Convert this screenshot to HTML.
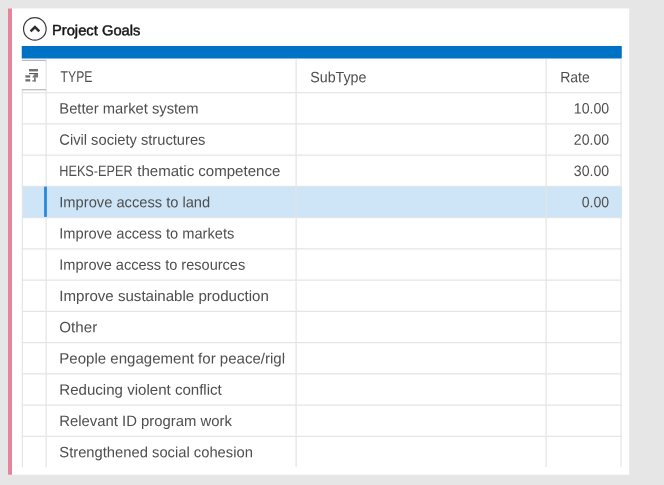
<!DOCTYPE html>
<html lang="en"><head><meta charset="utf-8"><title>Project Goals</title>
<style>
html,body{margin:0;padding:0;background:#e6e6e6;overflow:hidden}
body{width:664px;height:485px;position:relative}
svg{position:absolute;left:0;top:0;display:block;will-change:transform}
text{font-family:"Liberation Sans",Arial,sans-serif;font-size:15.0px;fill:#4e4e4e;text-rendering:geometricPrecision}
.caps{font-size:15.6px}
.title{font-size:14.5px;fill:#151515;stroke:#151515;stroke-width:0.45px}
</style></head><body>
<svg width="664" height="485" viewBox="0 0 664 485">
<rect x="0" y="0" width="664" height="485" fill="#e6e6e6"/>
<rect x="8" y="8.45" width="621.2" height="466.3" fill="#ffffff"/>
<rect x="8" y="8.45" width="4" height="466.3" fill="#e7839a"/>
<circle cx="34.85" cy="28.9" r="11.3" fill="none" stroke="#3a3a3a" stroke-width="1.2"/>
<polyline points="30.6,31.4 34.95,27.15 39.3,31.4" fill="none" stroke="#2e2e2e" stroke-width="2.55"/>
<text class="title" x="51.9" y="35.15" transform="rotate(0.03 96.2 35.1)" textLength="88.6" lengthAdjust="spacingAndGlyphs">Project Goals</text>
<rect x="21.75" y="46" width="600" height="12.5" fill="#0072c6"/>
<defs><clipPath id="g"><rect x="20" y="59" width="603" height="408.0"/></clipPath>
<clipPath id="c1"><rect x="47" y="59" width="237.5" height="420"/></clipPath></defs>
<g clip-path="url(#g)">
<rect x="21.75" y="92.00" width="600" height="1.25" fill="#e5e5e5"/>
<rect x="21.75" y="123.25" width="600" height="1.25" fill="#e5e5e5"/>
<rect x="21.75" y="154.50" width="600" height="1.25" fill="#e5e5e5"/>
<rect x="21.75" y="185.75" width="600" height="1.25" fill="#e5e5e5"/>
<rect x="21.75" y="217.00" width="600" height="1.25" fill="#e5e5e5"/>
<rect x="21.75" y="248.25" width="600" height="1.25" fill="#e5e5e5"/>
<rect x="21.75" y="279.50" width="600" height="1.25" fill="#e5e5e5"/>
<rect x="21.75" y="310.75" width="600" height="1.25" fill="#e5e5e5"/>
<rect x="21.75" y="342.00" width="600" height="1.25" fill="#e5e5e5"/>
<rect x="21.75" y="373.25" width="600" height="1.25" fill="#e5e5e5"/>
<rect x="21.75" y="404.50" width="600" height="1.25" fill="#e5e5e5"/>
<rect x="21.75" y="435.75" width="600" height="1.25" fill="#e5e5e5"/>
<rect x="21.75" y="467.00" width="600" height="1.25" fill="#e5e5e5"/>
<rect x="23" y="186.8" width="598.75" height="30.4" fill="#cde5f7"/>
<rect x="21.75" y="90.3" width="1.25" height="420" fill="#e5e5e5"/>
<rect x="45.5" y="59.75" width="1.25" height="420" fill="#e5e5e5"/>
<rect x="45.5" y="187.1" width="1.25" height="29.9" fill="#dce4eb"/>
<rect x="295.5" y="59.0" width="1.25" height="420" fill="#e5e5e5"/>
<rect x="295.5" y="187.1" width="1.25" height="29.9" fill="#dce4eb"/>
<rect x="545.5" y="59.0" width="1.25" height="420" fill="#e5e5e5"/>
<rect x="545.5" y="187.1" width="1.25" height="29.9" fill="#dce4eb"/>
<rect x="620.35" y="58.5" width="1.25" height="420" fill="#e5e5e5"/>
<rect x="620.3" y="186.8" width="1.45" height="30.4" fill="#cde5f7"/>
<rect x="21.75" y="59.75" width="24.4" height="1.25" fill="#bcbcbc"/>
<rect x="21.75" y="89.1" width="24.4" height="1.25" fill="#bcbcbc"/>
<rect x="44.1" y="186.6" width="2.8" height="30.3" fill="#2b88d8"/>
</g>
<g fill="#6a6a6a">
<rect x="29" y="69" width="9" height="2.4" fill="#727272"/>
<rect x="29" y="73" width="9" height="1.15" fill="#5a5a5a"/>
<polygon points="32.2,77.6 34.3,74.3 37.2,74.1 38,74.1 38,77.6" fill="#777777"/>
<rect x="34.2" y="77.4" width="1.4" height="4.1" fill="#5a5a5a"/>
<rect x="32.2" y="80.3" width="3.4" height="1.2" fill="#707070"/>
<rect x="25.4" y="75.3" width="4.8" height="2.3" fill="#6e6e6e"/>
<rect x="25.4" y="79.2" width="4.8" height="2.3" fill="#6e6e6e"/>
</g>
<text class="caps" x="60.6" y="82.15" transform="rotate(0.03 76.5 82.2)" textLength="31.8" lengthAdjust="spacingAndGlyphs">TYPE</text>
<text x="310.2" y="82.15" transform="rotate(0.03 338.3 82.2)" textLength="56.3" lengthAdjust="spacingAndGlyphs">SubType</text>
<text x="560.2" y="82.15" transform="rotate(0.03 575.0 82.2)" textLength="29.6" lengthAdjust="spacingAndGlyphs">Rate</text>
<text x="59.3" y="113.50" transform="rotate(0.03 128.9 113.5)" textLength="139.3" lengthAdjust="spacingAndGlyphs">Better market system</text>
<text x="573.8" y="113.50" transform="rotate(0.03 591.5 113.5)" textLength="35.3" lengthAdjust="spacingAndGlyphs">10.00</text>
<text x="59.3" y="144.75" transform="rotate(0.03 132.4 144.8)" textLength="146.1" lengthAdjust="spacingAndGlyphs">Civil society structures</text>
<text x="573.8" y="144.75" transform="rotate(0.03 591.5 144.8)" textLength="35.3" lengthAdjust="spacingAndGlyphs">20.00</text>
<text y="176.00" transform="rotate(0.03 169.8 176.0)"><tspan x="59.3" textLength="73.3" lengthAdjust="spacingAndGlyphs">HEKS-EPER</tspan> <tspan x="137.3" textLength="143.0" lengthAdjust="spacingAndGlyphs">thematic competence</tspan></text>
<text x="573.8" y="176.00" transform="rotate(0.03 591.5 176.0)" textLength="35.3" lengthAdjust="spacingAndGlyphs">30.00</text>
<text x="59.3" y="207.25" transform="rotate(0.03 134.8 207.2)" textLength="150.9" lengthAdjust="spacingAndGlyphs">Improve access to land</text>
<text x="581.7" y="207.25" transform="rotate(0.03 595.4 207.2)" textLength="27.4" lengthAdjust="spacingAndGlyphs">0.00</text>
<text x="59.3" y="238.50" transform="rotate(0.03 146.8 238.5)" textLength="175.0" lengthAdjust="spacingAndGlyphs">Improve access to markets</text>
<text x="59.3" y="269.75" transform="rotate(0.03 152.2 269.8)" textLength="185.9" lengthAdjust="spacingAndGlyphs">Improve access to resources</text>
<text x="59.3" y="301.00" transform="rotate(0.03 164.1 301.0)" textLength="209.5" lengthAdjust="spacingAndGlyphs">Improve sustainable production</text>
<text x="59.3" y="332.25" transform="rotate(0.03 78.2 332.2)" textLength="37.9" lengthAdjust="spacingAndGlyphs">Other</text>
<g clip-path="url(#c1)"><text x="59.3" y="363.50" transform="rotate(0.03 180.6 363.5)" textLength="242.5" lengthAdjust="spacingAndGlyphs">People engagement for peace/rights</text></g>
<text x="59.3" y="394.75" transform="rotate(0.03 140.6 394.8)" textLength="162.5" lengthAdjust="spacingAndGlyphs">Reducing violent conflict</text>
<text x="59.3" y="426.00" transform="rotate(0.03 145.6 426.0)" textLength="172.6" lengthAdjust="spacingAndGlyphs">Relevant ID program work</text>
<text x="59.3" y="457.25" transform="rotate(0.03 156.1 457.2)" textLength="193.6" lengthAdjust="spacingAndGlyphs">Strengthened social cohesion</text>
</svg>
</body></html>
